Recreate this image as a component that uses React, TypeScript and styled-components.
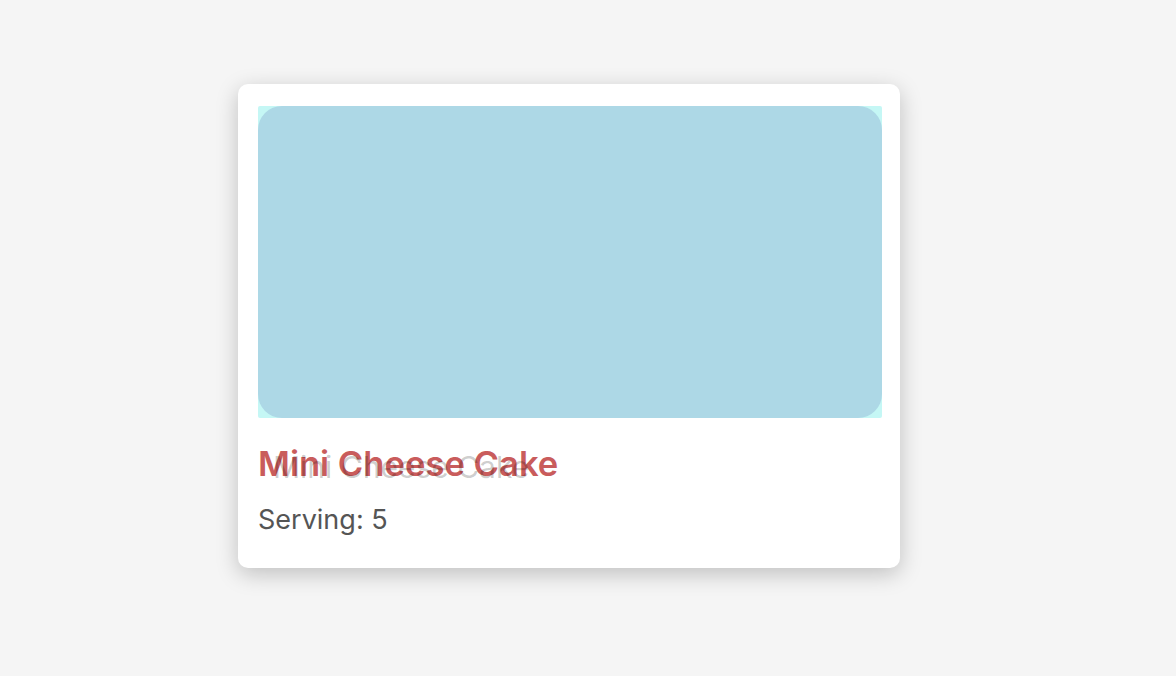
import React from 'react';
import styled, { createGlobalStyle } from 'styled-components';

const GlobalStyle = createGlobalStyle`
  html, body {
    margin: 0;
    padding: 0;
    background: #f5f5f5;
    font-family: Inter, "Noto Sans", sans-serif;
  }
`;

const Page = styled.main`
  min-height: 676px;
  padding: 84px 0 0 238px;
  box-sizing: border-box;
`;

const Card = styled.article`
  width: 662px;
  box-sizing: border-box;
  padding: 22px 18px 32px 20px;
  background: #ffffff;
  border-radius: 10px;
  box-shadow: 0 6px 22px rgba(0, 0, 0, 0.22);
`;

const ImageFrame = styled.div`
  width: 624px;
  height: 312px;
  background: #c5f7f5;
  border-radius: 2px;
`;

const ImageFill = styled.div<{ $color: string }>`
  width: 100%;
  height: 100%;
  background: ${props => props.$color};
  border-radius: 24px;
`;

const Title = styled.h2`
  position: relative;
  margin: 25px 0 0;
  font-size: 34.6px;
  line-height: 40px;
  font-weight: 600;
  color: #c95c5c;

  &::after {
    content: attr(data-shadow);
    position: absolute;
    left: 15px;
    top: 4px;
    font-size: 30px;
    line-height: 40px;
    font-weight: 400;
    color: rgba(0, 0, 0, 0.2);
    white-space: nowrap;
  }
`;

const Meta = styled.p`
  margin: 21px 0 0;
  font-size: 27px;
  line-height: 32px;
  color: #555555;
`;

const recipe = { name: 'Mini Cheese Cake', serving: 5, color: '#add8e6' };

export default function App() {
  return (
    <>
      <GlobalStyle />
      <Page>
        <Card>
          <ImageFrame>
            <ImageFill $color={recipe.color} />
          </ImageFrame>
          <Title data-shadow={recipe.name}>{recipe.name}</Title>
          <Meta>Serving: {recipe.serving}</Meta>
        </Card>
      </Page>
    </>
  );
}
